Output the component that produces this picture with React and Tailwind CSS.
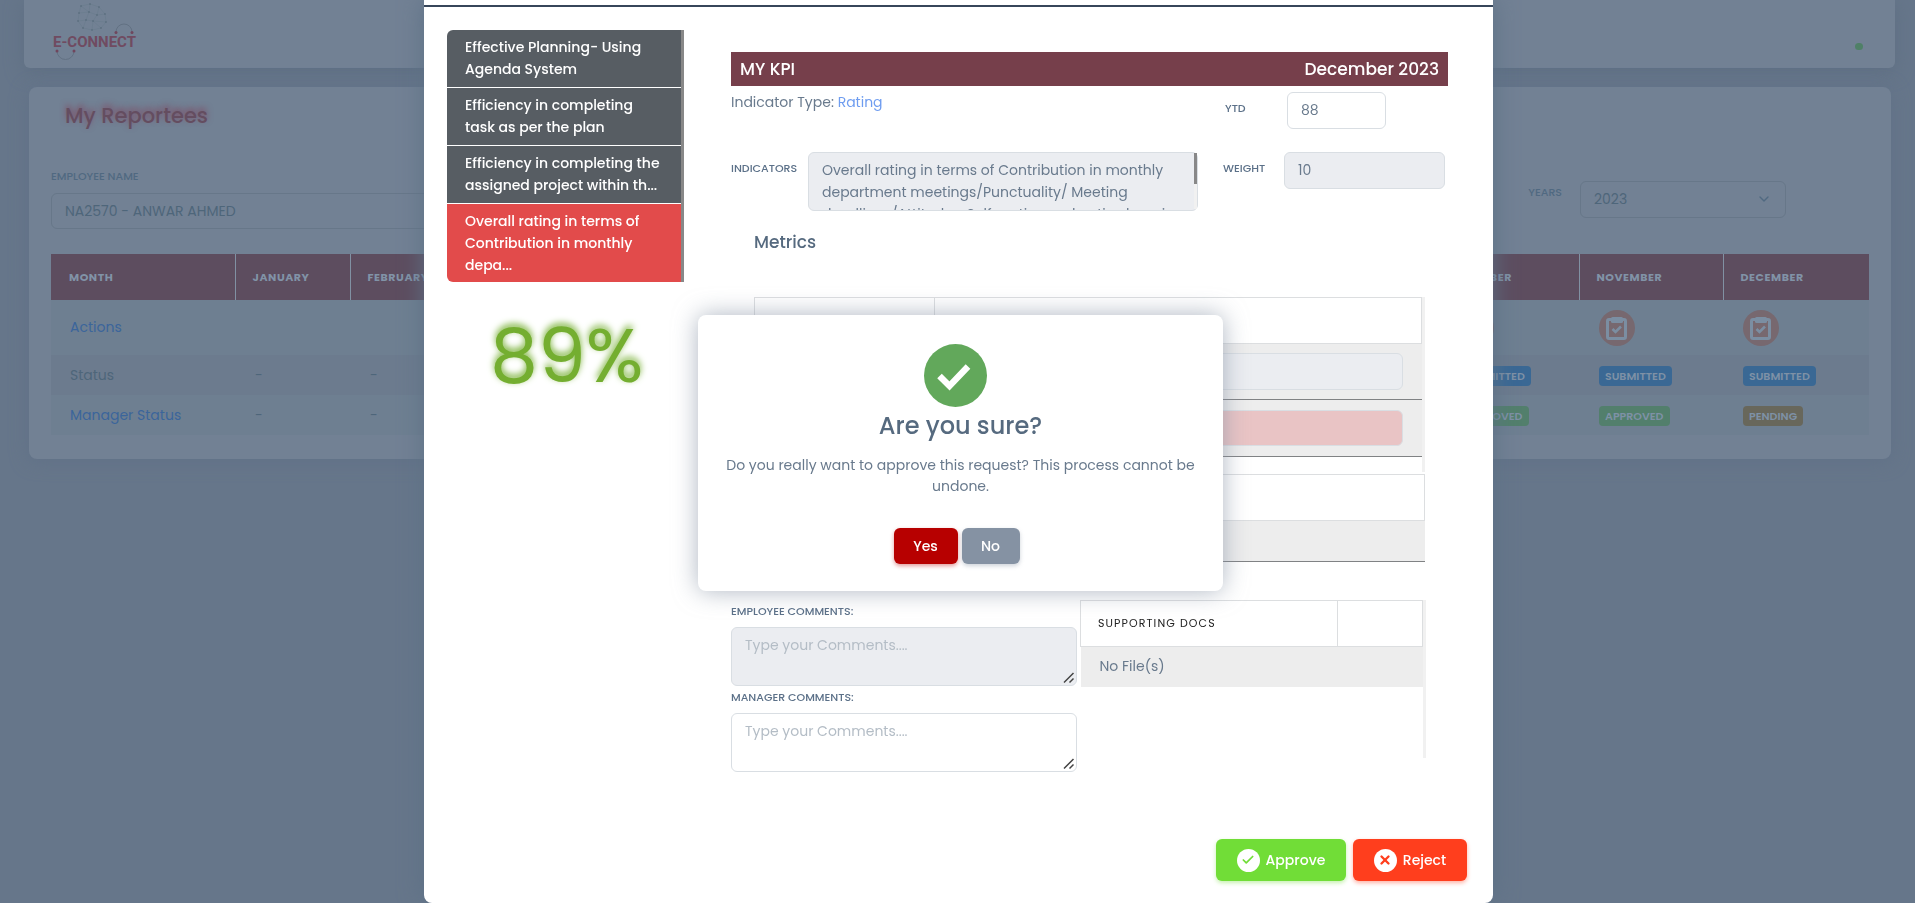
import { ChevronDown, Check, X } from "lucide-react";

const months = ["JANUARY", "FEBRUARY", "MARCH", "APRIL", "MAY", "JUNE", "JULY", "AUGUST", "SEPTEMBER", "OCTOBER", "NOVEMBER", "DECEMBER"];

const monthWidths = {
  JANUARY: "w-[115px]",
  OCTOBER: "w-[141px]",
  NOVEMBER: "w-[144px]",
  DECEMBER: "w-[146px]",
};

const kpis = [
  "Effective Planning- Using Agenda System",
  "Efficiency in completing task as per the plan",
  "Efficiency in completing the assigned project within th...",
  "Overall rating in terms of Contribution in monthly depa...",
];

const badgeTones = {
  SUBMITTED: "bg-[#3a6894]",
  APPROVED: "bg-[#527f6c]",
  PENDING: "bg-[#68675b]",
};

function Badge({ label }) {
  return (
    <span className={`inline-block rounded px-1.5 text-[11px] leading-5 font-semibold text-[#7e91a6] ${badgeTones[label]}`}>{label}</span>
  );
}

function Logo() {
  const pts = [[52, 6], [61, 4], [70, 7], [76, 14], [77, 22], [72, 28], [63, 30], [54, 28], [49, 21], [50, 13], [60, 12], [68, 15], [64, 21], [57, 20]];
  const links = [[0, 1], [1, 2], [2, 3], [3, 4], [4, 5], [5, 6], [6, 7], [7, 8], [8, 9], [9, 0], [10, 0], [10, 1], [10, 9], [11, 2], [11, 3], [11, 10], [12, 11], [12, 5], [12, 6], [13, 12], [13, 8], [13, 7], [13, 10], [12, 4]];
  return (
    <svg width="110" height="62" viewBox="0 0 110 62" role="img" aria-label="E-Connect">
      <g transform="translate(-11)">
        {links.map(([a, b], i) => (
          <line key={i} x1={pts[a][0]} y1={pts[a][1]} x2={pts[b][0]} y2={pts[b][1]} stroke="#677a8b" strokeWidth="0.5" />
        ))}
        {pts.map(([x, y], i) => (
          <circle key={i} cx={x} cy={y} r="0.7" fill="#4e6372" />
        ))}
      </g>
      <path d="M76 32a8 8 0 0 1 16 0" fill="none" stroke="#627183" strokeWidth="1" />
      <path d="M17 51a8.500 8.500 0 0 0 17 0" fill="none" stroke="#627183" strokeWidth="1" />
      <g fill="#70465d">
        <circle cx="76" cy="32.500" r="1.500" />
        <circle cx="92" cy="32.500" r="1.500" />
        <circle cx="17" cy="51" r="1.500" />
        <circle cx="34" cy="51" r="1.500" />
      </g>
      <text x="13" y="47" fontFamily="Roboto, sans-serif" fontWeight="700" fontSize="15" fill="#704b61">E-CONNECT</text>
    </svg>
  );
}

function ReviewIcon() {
  return (
    <svg viewBox="0 0 36 36" className="size-9" aria-hidden="true">
      <circle cx="18" cy="18" r="18" fill="#77686f" />
      <rect x="8.500" y="9.500" width="18" height="19" rx="1.500" fill="none" stroke="#7b8ea2" strokeWidth="3" />
      <rect x="12" y="7" width="12" height="6" rx="1.500" fill="#7b8ea2" />
      <path d="m13.500 19 3 3 5.500-5.500" fill="none" stroke="#7b8ea2" strokeWidth="2.600" />
    </svg>
  );
}

function ReporteesPage() {
  return (
    <div className="min-h-screen bg-[#66768a] pr-6 pl-7">
      <header className="-mr-1 -ml-1 flex h-[68px] items-start justify-between rounded-b-md bg-[#728194] pr-8 pl-4 shadow-[0_4px_18px_#5f6f83]">
        <Logo />
        <span className="mt-[43px] h-[7px] w-2 rounded-full bg-[#4f8067]" />
      </header>
      <main className="mt-[19px] mr-0 ml-px rounded-lg bg-[#728194] px-[22px] pt-4 pb-6 shadow-[0_2px_18px_#617187]">
        <h1 className="ml-3.5 text-[21px] leading-[26px] font-medium text-[#644d60] [text-shadow:0_-3px_6px_#7d4962]">My Reportees</h1>
        <div className="mt-[39px] flex items-start justify-between">
          <div className="w-1/4">
            <label htmlFor="employee" className="block text-[11px] leading-4 font-medium text-[#506981]">EMPLOYEE NAME</label>
            <input id="employee" readOnly value="NA2570 - ANWAR AHMED" className="mt-[9px] h-9 w-full rounded-md border border-[#677789] px-[13px] text-[14px] text-[#4e667a]" />
          </div>
          <div className="mt-[13px] mr-[83px] flex items-start gap-[18px]">
            <label htmlFor="years" className="mt-[3px] text-[11px] leading-4 font-medium text-[#506981]">YEARS</label>
            <div className="relative">
              <select id="years" defaultValue="2023" className="h-[37px] w-[206px] appearance-none rounded-md border border-[#677789] px-[13px] text-[14px] text-[#4e667a]">
                <option>2023</option>
              </select>
              <ChevronDown className="pointer-events-none absolute top-2.5 right-3.5 size-4 text-[#506981]" />
            </div>
          </div>
        </div>
        <table className="mt-[25px] w-full table-fixed border-collapse text-left text-[14px] text-[#4e667a]">
          <thead>
            <tr className="h-[46px] bg-[#5d4d5f] text-[11px] tracking-wider text-[#8193a7]">
              <th className="w-[184px] pl-[18px] font-bold">MONTH</th>
              {months.map((m) => (
                <th key={m} className={`overflow-hidden border-l border-[#8191a3] pl-[17px] font-bold ${monthWidths[m] ?? ""}`}>{m}</th>
              ))}
            </tr>
          </thead>
          <tbody>
            <tr className="h-[55px] bg-[#6e7f91]">
              <td className="pl-[19px]"><a href="#actions" className="text-[#3b659b]">Actions</a></td>
              {months.map((m, i) => (
                <td key={m} className="pl-5">{i > 8 && <button type="button" aria-label={`Review ${m}`} className="block"><ReviewIcon /></button>}</td>
              ))}
            </tr>
            <tr className="h-10 bg-[#6c7b8e]">
              <td className="pl-[19px]">Status</td>
              {months.map((m, i) => (
                <td key={m} className="pl-5">{i > 8 ? <Badge label="SUBMITTED" /> : "-"}</td>
              ))}
            </tr>
            <tr className="h-10 bg-[#6e7f91]">
              <td className="pl-[19px]"><a href="#manager" className="text-[#3b659b]">Manager Status</a></td>
              {months.map((m, i) => (
                <td key={m} className="pl-5">{i > 8 ? <Badge label={i === 11 ? "PENDING" : "APPROVED"} /> : "-"}</td>
              ))}
            </tr>
          </tbody>
        </table>
      </main>
    </div>
  );
}

const fieldLabel = "text-[11px] leading-4 font-medium text-[#5b7088]";
const field = "block rounded-md border border-[#d9dee3] px-[13px] text-[14px] text-[#697a8d] placeholder:text-[#b4bdc6]";

function CommentBox({ id, label, readOnly, tone }) {
  return (
    <>
      <label htmlFor={id} className={fieldLabel}>{label}</label>
      <div className="relative mt-2 mb-[3px]">
        <textarea id={id} readOnly={readOnly} placeholder="Type your Comments...." className={`h-[59px] w-full resize-none py-1.5 leading-[22px] ${tone} ${field}`} />
        <svg viewBox="0 0 12 12" className="pointer-events-none absolute right-0.5 bottom-0.5 size-3" aria-hidden="true">
          <path d="M1 10.500 10.500 1M6.500 10.500l4-4" fill="none" stroke="#444444" strokeWidth="1.500" />
        </svg>
      </div>
    </>
  );
}

function KpiModal() {
  return (
    <section className="flex min-h-full w-full max-w-[1069px] flex-col rounded-b-lg bg-white shadow-[0_0_24px_#5c7085]">
      <div className="mt-[5px] flex grow border-t-2 border-[#37465a] pt-[23px] pr-[26px] pl-[23px]">
        <aside className="w-[237px] shrink-0">
          <nav className="overflow-hidden rounded-l-md border-r-[3px] border-[#888888]">
            {kpis.map((k, i) => (
              <button key={k} type="button" className={`block w-full pr-4 pl-[18px] text-left text-[14px] leading-[22px] font-medium text-white ${i === 3 ? "bg-[#e24b4b] py-1.5" : "min-h-[58px] border-b border-white bg-[#575d63] pt-[5px] pb-[7px]"}`}>{k}</button>
            ))}
          </nav>
          <p className="mt-[34px] ml-[43px] text-[76px] leading-20 font-normal text-[#74ae30] [text-shadow:0_-3px_7px_#74ae30]">89%</p>
        </aside>

        <div className="ml-[47px] flex grow flex-col">
          <div className="mt-[22px] mr-[19px] flex h-[34px] items-center justify-between bg-[#763f4b] px-[9px] text-[17px] leading-8 font-medium text-white">
            <h2>MY KPI</h2>
            <p>December 2023</p>
          </div>
          <div className="mr-[19px] flex h-[66px] items-start pt-1.5">
            <p className="grow text-[14px] leading-5 text-[#697a8d]">Indicator Type: <span className="text-[#6f9df0]">Rating</span></p>
            <label htmlFor="ytd" className={`mt-2 w-[62px] ${fieldLabel}`}>YTD</label>
            <input id="ytd" defaultValue="88" className={`mr-[62px] h-[37px] w-[99px] ${field}`} />
          </div>
          <div className="mr-[22px] flex items-start">
            <label htmlFor="indicators" className={`mt-2 w-[77px] shrink-0 ${fieldLabel}`}>INDICATORS</label>
            <div className="relative w-[390px] shrink-0">
              <textarea id="indicators" readOnly value={"Overall rating in terms of Contribution in monthly department meetings/Punctuality/ Meeting deadlines/Attitudes, Self motive and active learning / Team work"} className={`h-[59px] w-full resize-none overflow-hidden bg-[#ebedf1] py-1.5 leading-[22px] ${field}`} />
              <div className="absolute top-px right-px h-[56px] w-[3px] bg-[#f1f1f1]">
                <div className="h-[31px] bg-[#888888]" />
              </div>
            </div>
            <label htmlFor="weight" className={`mt-2 ml-[25px] w-[61px] shrink-0 ${fieldLabel}`}>WEIGHT</label>
            <input id="weight" readOnly value="10" className={`h-[37px] w-[161px] bg-[#ebedf1] ${field}`} />
          </div>

          <div className="mr-[42px] ml-[23px]">
            <h3 className="mt-5 text-[17px] leading-[22px] font-medium text-[#566a7f]">Metrics</h3>
            <div className="mt-[44px] h-[175px] border-r-[3px] border-[#f1f1f1]">
              <table className="w-full table-fixed border-collapse">
                <thead>
                  <tr className="h-[46px]">
                    <th className="w-[180px] border border-[#dcdee0]"></th>
                    <th className="border border-[#dcdee0]"></th>
                  </tr>
                </thead>
                <tbody>
                  <tr className="h-[56px] border-b border-[#808284] bg-[#ededed]">
                    <td></td>
                    <td className="pr-[19px] pl-4"><input aria-label="Target" readOnly className={`h-[37px] w-full bg-[#ebedf1] ${field}`} /></td>
                  </tr>
                  <tr className="h-[57px] border-b border-[#808284] bg-[#ededed]">
                    <td></td>
                    <td className="pr-[19px] pl-4"><input aria-label="Actual" readOnly className={`h-9 w-full bg-[#e9c4c5] ${field}`} /></td>
                  </tr>
                </tbody>
              </table>
            </div>
            <table className="mt-0.5 w-full border-collapse">
              <thead>
                <tr className="h-[46px]"><th className="border border-[#dcdee0]"></th></tr>
              </thead>
              <tbody>
                <tr className="h-[41px] border-b border-[#808284] bg-[#ededed]"><td></td></tr>
              </tbody>
            </table>
          </div>

          <div className="mt-[38px] mr-[41px] flex items-start gap-[3px]">
            <div className="flex w-[346px] shrink-0 flex-col pt-[3px]">
              <CommentBox id="emp-comments" label="EMPLOYEE COMMENTS:" readOnly tone="bg-[#ebedf1]" />
              <CommentBox id="mgr-comments" label="MANAGER COMMENTS:" tone="bg-white" />
            </div>
            <div className="h-[158px] grow border-r-[3px] border-[#f1f1f1]">
              <table className="w-full border-collapse text-left">
                <thead>
                  <tr className="h-[46px] text-[11px] tracking-widest text-[#222222]">
                    <th className="border border-[#dcdee0] pl-[17px] font-normal">SUPPORTING DOCS</th>
                    <th className="w-[85px] border border-[#dcdee0]"></th>
                  </tr>
                </thead>
                <tbody>
                  <tr className="h-10 bg-[#ededed] text-[14px] text-[#697a8d]">
                    <td colSpan={2} className="pl-[19px]">No File(s)</td>
                  </tr>
                </tbody>
              </table>
            </div>
          </div>

          <div className="mt-auto mb-[22px] flex justify-end gap-[7px] text-[14px] font-medium text-white">
            <button type="button" className="flex h-[42px] w-[130px] items-center justify-center gap-1.5 rounded-md bg-[#71dd37] shadow-[0_2px_4px_#71dd3766]">
              <span className="flex size-[23px] items-center justify-center rounded-full bg-white"><Check className="size-3.5 text-[#71dd37]" strokeWidth={3} /></span>
              Approve
            </button>
            <button type="button" className="flex h-[42px] w-[114px] items-center justify-center gap-1.5 rounded-md bg-[#ff3e1d] shadow-[0_2px_4px_#ff3e1d66]">
              <span className="flex size-[23px] items-center justify-center rounded-full bg-white"><X className="size-3.5 text-[#ff3e1d]" strokeWidth={4} /></span>
              Reject
            </button>
          </div>
        </div>
      </div>
    </section>
  );
}

function ConfirmDialog() {
  return (
    <div role="dialog" aria-modal="true" aria-labelledby="confirm-title" className="flex w-[525px] flex-col items-center rounded-lg bg-white px-6 pt-[29px] pb-[27px] text-center shadow-[0_0_24px_#8592a3aa]">
      <svg viewBox="0 0 63 63" className="mr-2.5 size-[63px]" aria-hidden="true">
        <circle cx="31.500" cy="31.500" r="31.500" fill="#62a85b" />
        <path d="m15.500 32 10 10L44 22.500" fill="none" stroke="#fff" strokeWidth="6.400" />
      </svg>
      <h2 id="confirm-title" className="mt-0.5 text-[24px] leading-[34px] font-medium text-[#566a7f]">Are you sure?</h2>
      <p className="mt-3 text-[14px] leading-[21px] text-[#697a8d]">Do you really want to approve this request? This process cannot be undone.</p>
      <div className="mt-[31px] mr-2 flex gap-1 text-[14px] font-medium text-white">
        <button type="button" className="h-9 w-16 rounded-md bg-[#b70000] shadow-[0_2px_4px_#b7000066]">Yes</button>
        <button type="button" className="h-9 w-[58px] rounded-md bg-[#8592a3] shadow-[0_2px_4px_#8592a366]">No</button>
      </div>
    </div>
  );
}

export default function App() {
  return (
    <div className="font-[Poppins,Inter,sans-serif]">
      <ReporteesPage />
      <div className="fixed inset-0 flex justify-center overflow-hidden pl-0.5">
        <KpiModal />
      </div>
      <div className="fixed inset-0 flex items-center justify-center pt-[3px] pl-1.5">
        <ConfirmDialog />
      </div>
    </div>
  );
}
